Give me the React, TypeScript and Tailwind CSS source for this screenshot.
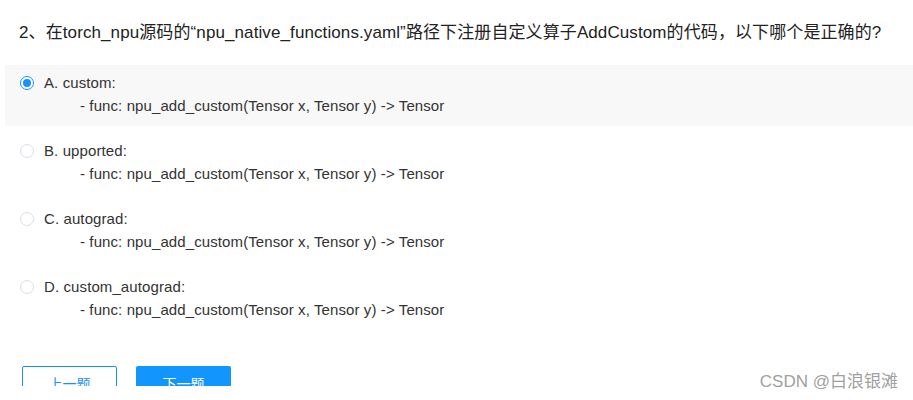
import React from 'react';

const options = [
  { key: 'A', label: 'custom:' },
  { key: 'B', label: 'upported:' },
  { key: 'C', label: 'autograd:' },
  { key: 'D', label: 'custom_autograd:' },
];

const Radio = ({ checked }: { checked: boolean }) => (
  <span
    className={`w-[14px] h-[14px] rounded-full border flex items-center justify-center shrink-0 bg-white ${
      checked ? 'border-[#1890ff]' : 'border-[#dcdfe6]'
    }`}
  >
    {checked && <span className="w-[8px] h-[8px] rounded-full bg-[#1890ff]" />}
  </span>
);

export default function App() {
  const selected = 'A';
  return (
    <div
      className="relative w-[913px] h-[400px] bg-white"
      style={{ fontFamily: '"Liberation Sans", "Noto Sans CJK SC", sans-serif' }}
    >
      <div className="h-[386px] overflow-hidden">
        {/* Question */}
        <div className="pt-[21px] pl-[19px] text-[17px] leading-[24px] tracking-[0.1px] text-[#222]">
          2、在torch_npu源码的“npu_native_functions.yaml”路径下注册自定义算子AddCustom的代码，以下哪个是正确的?
        </div>

        {/* Options */}
        <div className="mt-[20px] pl-[5px] flex flex-col gap-[7px]">
          {options.map((o) => (
            <div
              key={o.key}
              className={`h-[61px] pt-[6px] pl-[15px] text-[15px] leading-[23px] tracking-[0.1px] text-[#333] ${
                selected === o.key ? 'bg-[#f8f8f8]' : ''
              }`}
            >
              <div className="flex items-center gap-[10px]">
                <Radio checked={selected === o.key} />
                <span>
                  {o.key}. {o.label}
                </span>
              </div>
              <div className="pl-[60px]">- func: npu_add_custom(Tensor x, Tensor y) -&gt; Tensor</div>
            </div>
          ))}
        </div>

        {/* Actions */}
        <div className="mt-[36px] pl-[22px] flex gap-[19px]">
          <button className="w-[95px] h-[36px] border border-[#1890ff] rounded-[2px] text-[#1890ff] text-[14px] bg-white">
            上一题
          </button>
          <button className="w-[95px] h-[36px] rounded-[2px] bg-[#1296fd] text-white text-[14px]">
            下一题
          </button>
        </div>
      </div>

      <span className="absolute right-[15px] top-[371px] text-[17px] leading-[22px] text-[#a0a0a0]">
        CSDN @白浪银滩
      </span>
    </div>
  );
}
